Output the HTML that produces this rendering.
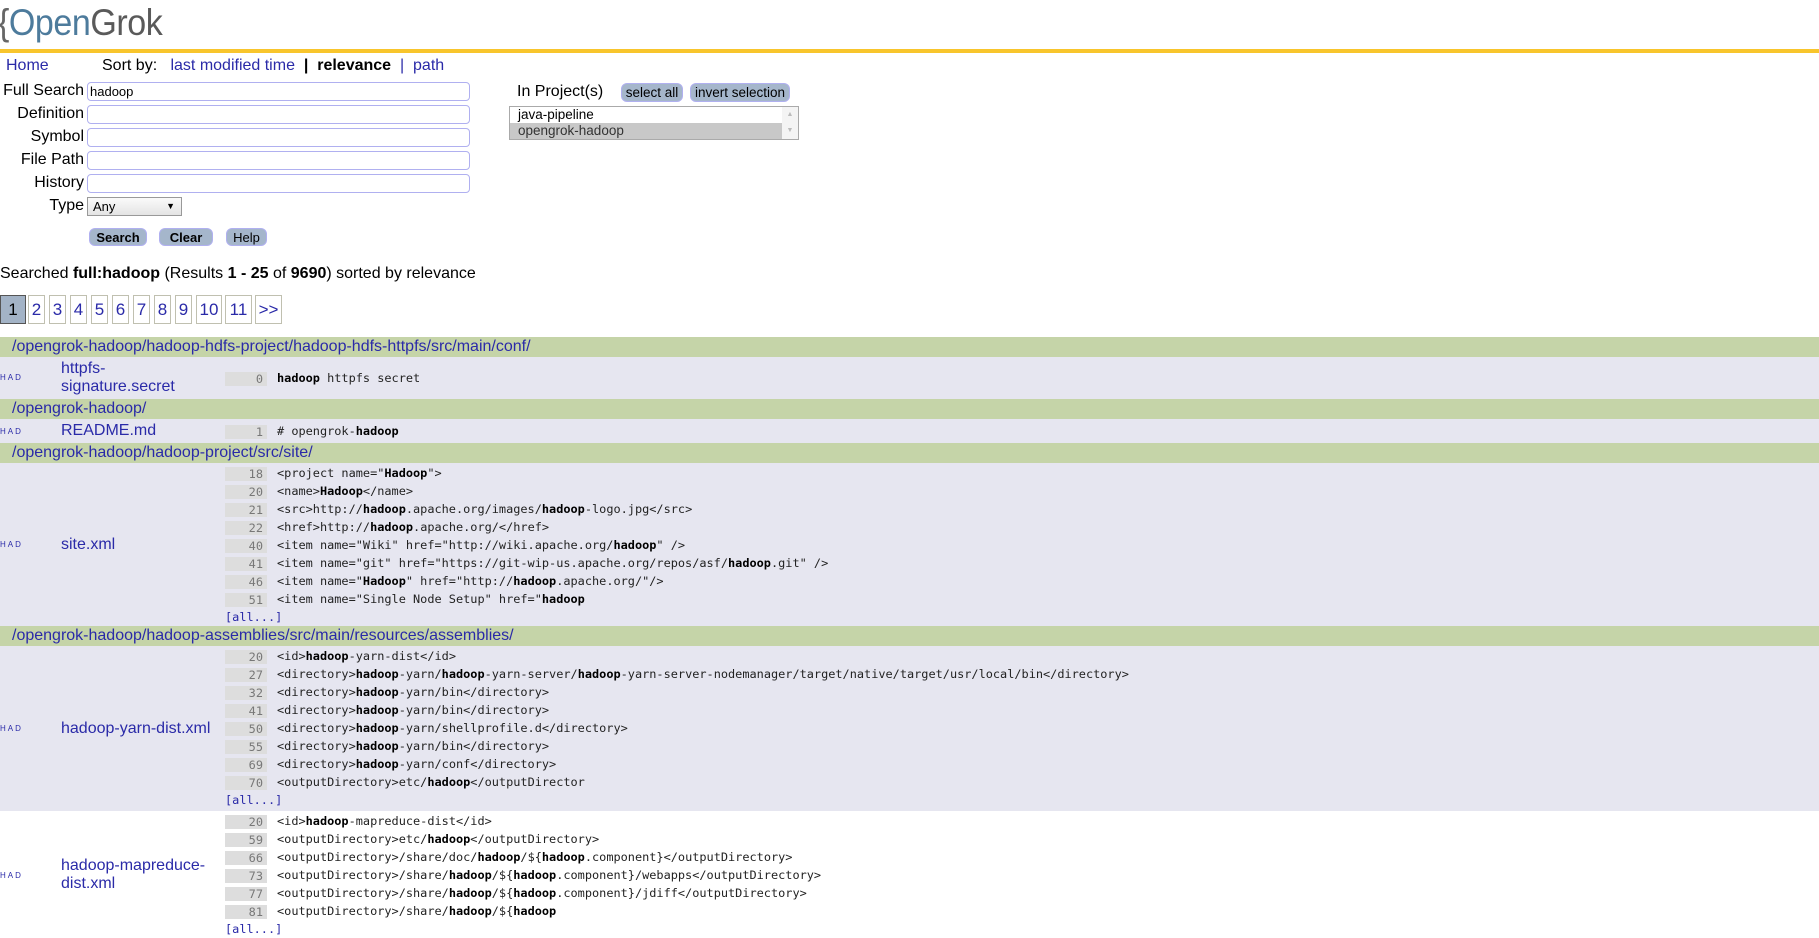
<!DOCTYPE html>
<html><head><meta charset="utf-8">
<style>
*{margin:0;padding:0;box-sizing:border-box}
body{width:1819px;height:927px;overflow:hidden;background:#fff;font-family:"Liberation Sans",sans-serif;font-size:16px;color:#000;position:relative}
a{color:#2a2aa8;text-decoration:none}
.abs{position:absolute}
.logo{left:-2px;top:2px;font-size:37px;letter-spacing:-0.5px;transform:scaleX(0.92);transform-origin:left}
.yl{left:0;top:49px;width:1819px;height:4px;background:#f8c52c}
.lbl{position:absolute;right:1735px;font-size:16px;white-space:nowrap}
.inp{position:absolute;left:87px;width:383px;height:19px;border:1px solid #b0b0f0;border-radius:4px;background:#fff;font-size:13px;padding-left:2px;line-height:17px}
.btn{position:absolute;background:#a5b6cb;border:1px solid #b0b0f0;border-radius:6px;font-size:13px;text-align:center;line-height:17px}
.pg{position:absolute;top:295px;height:29px;border:1px solid #c0c0b0;text-align:center;line-height:27px;font-size:17px;color:#2a2aa8}
.green{position:absolute;left:0;width:1819px;height:20px;background:#c5d4a8;padding-left:12px;font-size:16px;line-height:20px}
.row{position:absolute;left:0;width:1819px;background:#e6e6f0}
.had{position:absolute;left:0;font-size:8px;letter-spacing:2px;color:#2a2aa8}
.fn{position:absolute;left:61px;font-size:16px;line-height:18px}
.code{position:absolute;left:225px;font-family:"DejaVu Sans Mono","Liberation Mono",monospace;font-size:11.9px;line-height:18px;color:#222}
.code div{height:18px;white-space:pre}
.ln{display:inline-block;width:42px;background:#ddd;color:#777;text-align:right;padding-right:4px;height:14px;line-height:14px;margin-right:10px;vertical-align:-1px}
.code b{color:#000}
.all{color:#2a2aa8}
</style></head><body>
<div class="abs logo"><span style="color:#666">{</span><span style="color:#4d7b9c">Open</span><span style="color:#5a5a5a">Grok</span></div>
<div class="abs yl"></div>

<div class="abs" style="left:6px;top:57px"><a>Home</a></div>
<div class="abs" style="left:102px;top:57px">Sort by:&nbsp;&nbsp; <a>last modified time</a>&nbsp; <b>|</b>&nbsp; <b>relevance</b>&nbsp; <span style="color:#2a2aa8">|</span>&nbsp; <a>path</a></div>

<div class="lbl" style="top:82px">Full Search</div>
<div class="inp" style="top:82px">hadoop</div>
<div class="lbl" style="top:105px">Definition</div>
<div class="inp" style="top:105px"></div>
<div class="lbl" style="top:128px">Symbol</div>
<div class="inp" style="top:128px"></div>
<div class="lbl" style="top:151px">File Path</div>
<div class="inp" style="top:151px"></div>
<div class="lbl" style="top:174px">History</div>
<div class="inp" style="top:174px"></div>
<div class="lbl" style="top:197px">Type</div>
<div class="abs" style="left:87px;top:197px;width:95px;height:19px;border:1px solid #999;background:linear-gradient(#fafafa,#e4e4e4);font-size:13px;padding-left:5px;line-height:17px">Any<span style="position:absolute;right:6px;font-size:9px">▼</span></div>

<div class="btn" style="left:89px;top:228px;width:58px;height:18px;font-weight:bold">Search</div>
<div class="btn" style="left:159px;top:228px;width:54px;height:18px;font-weight:bold">Clear</div>
<div class="btn" style="left:226px;top:228px;width:41px;height:18px">Help</div>

<div class="abs" style="left:517px;top:83px">In Project(s)</div>
<div class="btn" style="left:621px;top:83px;width:62px;height:19px;font-size:13.5px">select all</div>
<div class="btn" style="left:690px;top:83px;width:100px;height:19px;font-size:13.5px">invert selection</div>
<div class="abs" style="left:509px;top:106px;width:290px;height:34px;border:1px solid #aaa;background:#fff;font-size:13.5px;line-height:16px">
<div style="padding-left:8px">java-pipeline</div>
<div style="padding-left:8px;background:#c8c8c8;color:#333;margin-right:16px">opengrok-hadoop</div>
<div style="position:absolute;right:0;top:0;width:16px;height:32px;background:#f4f4f4;color:#bbb;font-size:7px;text-align:center;line-height:16px">▲<br>▼</div>
</div>

<div class="abs" style="left:0;top:265px">Searched <b>full:hadoop</b> (Results <b>1 - 25</b> of <b>9690</b>) sorted by relevance</div>

<div class="pg" style="left:0;width:26px;background:#a3b3c6;border-color:#555;color:#000">1</div>
<div class="pg" style="left:28px;width:17px">2</div>
<div class="pg" style="left:49px;width:17px">3</div>
<div class="pg" style="left:70px;width:17px">4</div>
<div class="pg" style="left:91px;width:17px">5</div>
<div class="pg" style="left:112px;width:17px">6</div>
<div class="pg" style="left:133px;width:17px">7</div>
<div class="pg" style="left:154px;width:17px">8</div>
<div class="pg" style="left:175px;width:17px">9</div>
<div class="pg" style="left:196px;width:26px">10</div>
<div class="pg" style="left:225px;width:27px">11</div>
<div class="pg" style="left:255px;width:27px">&gt;&gt;</div>

<div class="green" style="top:337px"><a>/opengrok-hadoop/hadoop-hdfs-project/hadoop-hdfs-httpfs/src/main/conf/</a></div>
<div class="row" style="top:357px;height:42px">
<div class="had" style="top:16px">HAD</div>
<div class="fn" style="top:3px"><a>httpfs-<br>signature.secret</a></div>
<div class="code" style="top:12px"><div><span class="ln">0</span><b>hadoop</b> httpfs secret</div></div>
</div>

<div class="green" style="top:399px"><a>/opengrok-hadoop/</a></div>
<div class="row" style="top:419px;height:24px">
<div class="had" style="top:8px">HAD</div>
<div class="fn" style="top:3px"><a>README.md</a></div>
<div class="code" style="top:3px"><div><span class="ln">1</span># opengrok-<b>hadoop</b></div></div>
</div>

<div class="green" style="top:443px"><a>/opengrok-hadoop/hadoop-project/src/site/</a></div>
<div class="row" style="top:463px;height:163px">
<div class="had" style="top:77px">HAD</div>
<div class="fn" style="top:73px"><a>site.xml</a></div>
<div class="code" style="top:1px"><div><span class="ln">18</span>&lt;project name="<b>Hadoop</b>"&gt;</div><div><span class="ln">20</span>&lt;name&gt;<b>Hadoop</b>&lt;/name&gt;</div><div><span class="ln">21</span>&lt;src&gt;http://<b>hadoop</b>.apache.org/images/<b>hadoop</b>-logo.jpg&lt;/src&gt;</div><div><span class="ln">22</span>&lt;href&gt;http://<b>hadoop</b>.apache.org/&lt;/href&gt;</div><div><span class="ln">40</span>&lt;item name="Wiki" href="http://wiki.apache.org/<b>hadoop</b>" /&gt;</div><div><span class="ln">41</span>&lt;item name="git" href="https://git-wip-us.apache.org/repos/asf/<b>hadoop</b>.git" /&gt;</div><div><span class="ln">46</span>&lt;item name="<b>Hadoop</b>" href="http://<b>hadoop</b>.apache.org/"/&gt;</div><div><span class="ln">51</span>&lt;item name="Single Node Setup" href="<b>hadoop</b></div><div class="all">[all...]</div></div>
</div>

<div class="green" style="top:626px"><a>/opengrok-hadoop/hadoop-assemblies/src/main/resources/assemblies/</a></div>
<div class="row" style="top:646px;height:165px">
<div class="had" style="top:78px">HAD</div>
<div class="fn" style="top:74px"><a>hadoop-yarn-dist.xml</a></div>
<div class="code" style="top:1px"><div><span class="ln">20</span>&lt;id&gt;<b>hadoop</b>-yarn-dist&lt;/id&gt;</div><div><span class="ln">27</span>&lt;directory&gt;<b>hadoop</b>-yarn/<b>hadoop</b>-yarn-server/<b>hadoop</b>-yarn-server-nodemanager/target/native/target/usr/local/bin&lt;/directory&gt;</div><div><span class="ln">32</span>&lt;directory&gt;<b>hadoop</b>-yarn/bin&lt;/directory&gt;</div><div><span class="ln">41</span>&lt;directory&gt;<b>hadoop</b>-yarn/bin&lt;/directory&gt;</div><div><span class="ln">50</span>&lt;directory&gt;<b>hadoop</b>-yarn/shellprofile.d&lt;/directory&gt;</div><div><span class="ln">55</span>&lt;directory&gt;<b>hadoop</b>-yarn/bin&lt;/directory&gt;</div><div><span class="ln">69</span>&lt;directory&gt;<b>hadoop</b>-yarn/conf&lt;/directory&gt;</div><div><span class="ln">70</span>&lt;outputDirectory&gt;etc/<b>hadoop</b>&lt;/outputDirector</div><div class="all">[all...]</div></div>
</div>

<div class="abs" style="top:811px;left:0;width:1819px;height:116px">
<div class="had" style="top:60px">HAD</div>
<div class="fn" style="top:46px"><a>hadoop-mapreduce-<br>dist.xml</a></div>
<div class="code" style="top:1px"><div><span class="ln">20</span>&lt;id&gt;<b>hadoop</b>-mapreduce-dist&lt;/id&gt;</div><div><span class="ln">59</span>&lt;outputDirectory&gt;etc/<b>hadoop</b>&lt;/outputDirectory&gt;</div><div><span class="ln">66</span>&lt;outputDirectory&gt;/share/doc/<b>hadoop</b>/${<b>hadoop</b>.component}&lt;/outputDirectory&gt;</div><div><span class="ln">73</span>&lt;outputDirectory&gt;/share/<b>hadoop</b>/${<b>hadoop</b>.component}/webapps&lt;/outputDirectory&gt;</div><div><span class="ln">77</span>&lt;outputDirectory&gt;/share/<b>hadoop</b>/${<b>hadoop</b>.component}/jdiff&lt;/outputDirectory&gt;</div><div><span class="ln">81</span>&lt;outputDirectory&gt;/share/<b>hadoop</b>/${<b>hadoop</b></div><div class="all">[all...]</div></div>
</div>
</body></html>
